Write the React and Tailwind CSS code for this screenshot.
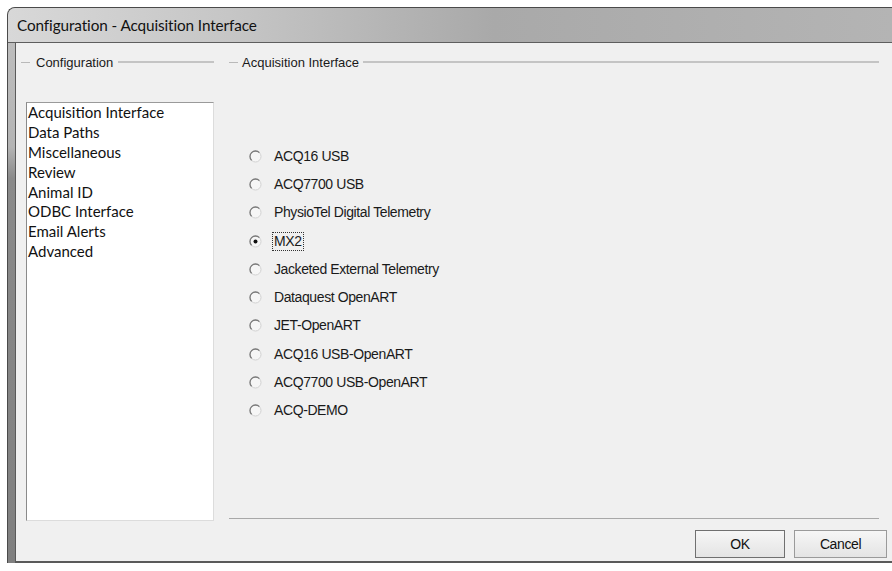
import React from 'react';

const pages = [
  'Acquisition Interface',
  'Data Paths',
  'Miscellaneous',
  'Review',
  'Animal ID',
  'ODBC Interface',
  'Email Alerts',
  'Advanced',
];

const interfaces = [
  'ACQ16 USB',
  'ACQ7700 USB',
  'PhysioTel Digital Telemetry',
  'MX2',
  'Jacketed External Telemetry',
  'Dataquest OpenART',
  'JET-OpenART',
  'ACQ16 USB-OpenART',
  'ACQ7700 USB-OpenART',
  'ACQ-DEMO',
];

function Radio({ checked }) {
  return (
    <svg width="13" height="13" viewBox="0 0 13 13" className="shrink-0">
      <circle cx="6.5" cy="6.5" r="5.5" fill="#f6f6f6" stroke="#d2d2d2" strokeWidth="1" />
      <path d="M2.6 10.4 A5.5 5.5 0 0 1 10.4 2.6" fill="none" stroke="#7a7a7a" strokeWidth="1.3" />
      {checked && <circle cx="6.5" cy="6.5" r="2" fill="#111" />}
    </svg>
  );
}

function GroupHeader({ title, pad = 'px-[4px]' }) {
  return (
    <div className="flex items-center h-[14px]">
      <div className="w-[9px] border-t border-[#b9b9b9]" />
      <span className={pad + ' text-[13px] leading-none text-[#1a1a1a]'}>{title}</span>
      <div className="flex-1 border-t-2 border-[#c4c4c4]" />
    </div>
  );
}

export default function App() {
  return (
    <div className="w-[892px] h-[571px] bg-white pt-[7px] pl-[7px] overflow-hidden font-['Liberation_Sans',Arial,sans-serif]">
      <div className="h-[556px] flex flex-col rounded-tl-[8px] overflow-hidden border-l border-t border-[#4a4a4a] bg-[#8a8a8a]">
        {/* caption bar */}
        <div className="h-[35px] shrink-0 flex items-center pl-[9px] border-b border-[#5e5e5e] bg-[linear-gradient(90deg,#d8d8d8_0%,#c6c6c6_25%,#a9a9a9_55%,#b4b4b4_100%)]">
          <span className="font-['Lato','Noto_Sans',sans-serif] text-[15.3px] text-[#111] tracking-[-0.1px]">
            Configuration - Acquisition Interface
          </span>
        </div>

        <div className="flex flex-1 min-h-0">
          {/* left frame */}
          <div className="w-[8px] shrink-0 border-r border-[#5a5a5a] bg-[linear-gradient(180deg,#bdbdbd_0%,#b4b4b4_20%,#8a8a8a_26%,#808080_100%)]" />

          {/* client area */}
          <div className="flex-1 flex flex-col bg-[#f0f0f0] pt-[12px] pl-[5px] pr-[5px] border-b-2 border-[#5a5a5a]">
            <div className="flex gap-[15px] h-[466px]">
              <div className="w-[193px] flex flex-col">
                <GroupHeader title="Configuration" pad="pl-[6px] pr-[5px] text-[13.5px]" />
                <div className="mt-[33px] ml-[5px] flex-1 bg-white border border-[#dcdcdc] border-l-[#8a8a8a] border-t-[#9a9a9a] pt-[0px] pl-[1px]">
                  {pages.map((p) => (
                    <div key={p} className="h-[19.9px] leading-[19.9px] font-['Lato','Noto_Sans',sans-serif] text-[15px] text-[#111]">
                      {p}
                    </div>
                  ))}
                </div>
              </div>

              <div className="w-[650px] flex flex-col">
                <GroupHeader title="Acquisition Interface" />
                <div className="mt-[73px] pl-[20px] flex flex-col">
                  {interfaces.map((name) => (
                    <div key={name} className="h-[28.3px] flex items-center gap-[11px]">
                      <Radio checked={name === 'MX2'} />
                      <span
                        className={
                          'text-[14px] leading-[17px] tracking-[-0.4px] text-[#1a1a1a] px-[1px] ' +
                          (name === 'MX2' ? 'outline outline-1 outline-dotted outline-[#333]' : '')
                        }
                      >
                        {name}
                      </span>
                    </div>
                  ))}
                </div>
                <div className="flex-1" />
                <div className="border-t border-[#a8a8a8] mb-[2px]" />
              </div>
            </div>

            <div className="flex justify-end gap-[9px] mt-[9px]">
              <button className="w-[90px] h-[28px] border border-[#707070] bg-[linear-gradient(180deg,#f6f6f6,#e4e4e4)] text-[14px] tracking-[-0.4px] text-[#111]">
                OK
              </button>
              <button className="w-[93px] h-[28px] border border-[#9a9a9a] bg-[linear-gradient(180deg,#f6f6f6,#e4e4e4)] text-[14px] tracking-[-0.4px] text-[#111]">
                Cancel
              </button>
            </div>
          </div>
        </div>
      </div>
    </div>
  );
}
